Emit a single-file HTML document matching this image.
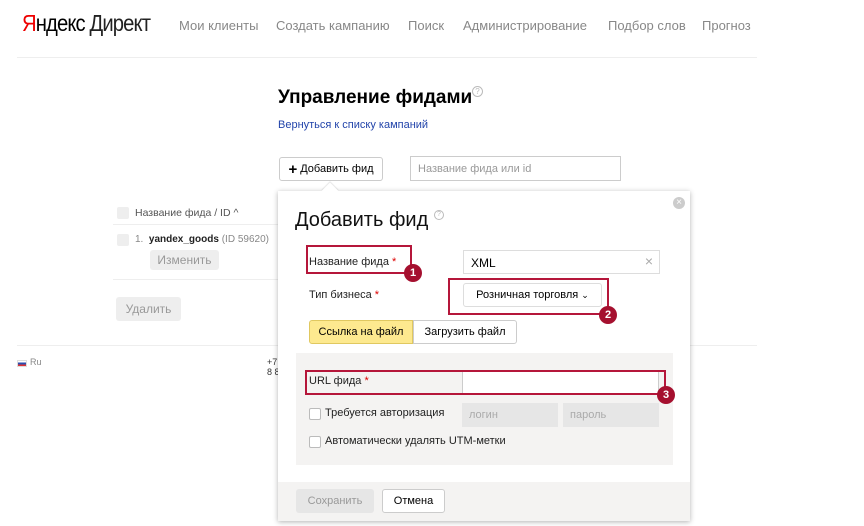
<!DOCTYPE html>
<html><head><meta charset="utf-8"><style>
*{box-sizing:border-box;margin:0;padding:0}
body{width:864px;height:526px;background:#fff;font-family:"Liberation Sans",sans-serif;position:relative;overflow:hidden;color:#000}
.a{position:absolute;white-space:nowrap}
.nav{font-size:13px;color:#888;top:18px}
.red{color:#d00}
.btn{position:absolute;border:1px solid #ccc;border-radius:3px;background:#fff;font-size:11px;display:flex;align-items:center;justify-content:center}
.gbtn{position:absolute;background:#eee;border-radius:3px;color:#999;font-size:12px;display:flex;align-items:center;justify-content:center}
.hl{position:absolute;border:2px solid #b5163a}
.num{position:absolute;width:18px;height:18px;border-radius:50%;background:#a5102f;color:#fff;font-size:11px;font-weight:bold;display:flex;align-items:center;justify-content:center}
.cb{position:absolute;width:12px;height:12px;border:1px solid #bbb;border-radius:2px;background:#fff}
.f{font-size:11px;color:#222}
</style></head><body>
<div class="a" style="left:22px;top:10px;font-size:23px;letter-spacing:-1px;transform:scaleX(.88);transform-origin:left"><span style="color:#e00">Я</span>ндекс <span style="color:#222">Директ</span></div>
<div class="a nav" style="left:179px">Мои клиенты</div>
<div class="a nav" style="left:276px">Создать кампанию</div>
<div class="a nav" style="left:408px">Поиск</div>
<div class="a nav" style="left:463px">Администрирование</div>
<div class="a nav" style="left:608px">Подбор слов</div>
<div class="a nav" style="left:702px">Прогноз</div>
<div class="a" style="left:17px;top:57px;width:740px;height:1px;background:#eee"></div>
<div class="a" style="left:278px;top:87px;font-size:19px;font-weight:bold">Управление фидами</div>
<div class="a" style="left:472px;top:86px;width:11px;height:11px;border:1px solid #bbb;border-radius:50%;font-size:8px;color:#bbb;text-align:center;line-height:9px;background:#fff">?</div>
<div class="a" style="left:278px;top:119px;font-size:11px;color:#2244aa">Вернуться к списку кампаний</div>
<div class="btn" style="left:279px;top:157px;width:104px;height:24px"><b style="font-size:15px;margin-right:3px">+</b>Добавить фид</div>
<div class="a" style="left:410px;top:156px;width:211px;height:25px;border:1px solid #ccc;font-size:11px;color:#999;padding:6px 7px">Название фида или id</div>
<div class="cb" style="left:117px;top:207px;background:#eee;border:none"></div>
<div class="a" style="left:135px;top:207px;font-size:10.5px;color:#555">Название фида / ID ^</div>
<div class="a" style="left:113px;top:224px;width:170px;height:1px;background:#eee"></div>
<div class="cb" style="left:117px;top:234px;background:#eee;border:none"></div>
<div class="a" style="left:135px;top:234px;font-size:10px;color:#888">1.&nbsp; <b style="color:#222">yandex_goods</b> (ID 59620)</div>
<div class="gbtn" style="left:150px;top:250px;width:69px;height:20px">Изменить</div>
<div class="a" style="left:113px;top:279px;width:170px;height:1px;background:#eee"></div>
<div class="gbtn" style="left:116px;top:297px;width:65px;height:24px">Удалить</div>
<div class="a" style="left:17px;top:345px;width:740px;height:1px;background:#eee"></div>
<div class="a" style="left:17px;top:360px;width:10px;height:7px;background:linear-gradient(#fff 33%,#2a4fb0 33%,#2a4fb0 66%,#d33 66%);border:1px solid #ddd"></div>
<div class="a" style="left:30px;top:357px;font-size:9px;color:#888">Ru</div>
<div class="a" style="left:267px;top:357px;font-size:9px;color:#333;line-height:10px">+7<br>8 8</div>
<!-- modal -->
<div class="a" style="left:278px;top:191px;width:412px;height:330px;background:#fff;box-shadow:0 1px 5px rgba(0,0,0,.3)"></div>
<div class="a" style="left:324px;top:185px;width:12px;height:12px;background:#fff;transform:rotate(45deg);box-shadow:-1px -1px 1px rgba(0,0,0,.1)"></div>
<div class="a" style="left:673px;top:197px;width:12px;height:12px;border-radius:50%;background:#ccc;color:#fff;font-size:10px;text-align:center;line-height:12px">×</div>
<div class="a" style="left:295px;top:209px;font-size:20px;color:#111">Добавить фид</div>
<div class="a" style="left:434px;top:210px;width:10px;height:10px;border:1px solid #bbb;border-radius:50%;font-size:7px;color:#bbb;text-align:center;line-height:8px;background:#fff">?</div>
<div class="a f" style="left:309px;top:256px">Название фида <span class="red">*</span></div>
<div class="hl" style="left:306px;top:245px;width:106px;height:29px"></div>
<div class="num" style="left:404px;top:264px">1</div>
<div class="a" style="left:463px;top:250px;width:197px;height:24px;border:1px solid #ddd;font-size:12px;padding:5px 7px">XML<span style="position:absolute;right:6px;color:#aaa;font-size:14px;top:2px">×</span></div>
<div class="a f" style="left:309px;top:289px">Тип бизнеса <span class="red">*</span></div>
<div class="btn" style="left:463px;top:283px;width:139px;height:24px;border-color:#ddd">Розничная торговля&nbsp;<span style="font-size:9px">&#8964;</span></div>
<div class="hl" style="left:448px;top:278px;width:161px;height:37px"></div>
<div class="num" style="left:599px;top:306px">2</div>
<div class="a" style="left:309px;top:320px;width:104px;height:24px;background:#fde98f;border:1px solid #e0c860;border-radius:3px 0 0 3px;font-size:11px;display:flex;align-items:center;justify-content:center">Ссылка на файл</div>
<div class="a" style="left:413px;top:320px;width:104px;height:24px;background:#fff;border:1px solid #ccc;border-radius:0 3px 3px 0;font-size:11px;display:flex;align-items:center;justify-content:center">Загрузить файл</div>
<div class="a" style="left:296px;top:353px;width:377px;height:112px;background:#f4f3f2"></div>
<div class="a f" style="left:309px;top:375px">URL фида <span class="red">*</span></div>
<div class="a" style="left:462px;top:371px;width:197px;height:23px;background:#fff;border:1px solid #ccc"></div>
<div class="hl" style="left:305px;top:370px;width:361px;height:25px"></div>
<div class="num" style="left:657px;top:386px">3</div>
<div class="cb" style="left:309px;top:408px"></div>
<div class="a f" style="left:325px;top:407px">Требуется авторизация</div>
<div class="a" style="left:462px;top:403px;width:96px;height:24px;background:#e6e6e6;font-size:11px;color:#aaa;padding:6px 7px">логин</div>
<div class="a" style="left:563px;top:403px;width:96px;height:24px;background:#e6e6e6;font-size:11px;color:#aaa;padding:6px 7px">пароль</div>
<div class="cb" style="left:309px;top:436px"></div>
<div class="a f" style="left:325px;top:435px">Автоматически удалять UTM-метки</div>
<div class="a" style="left:278px;top:482px;width:412px;height:39px;background:#f4f3f2"></div>
<div class="gbtn" style="left:296px;top:489px;width:78px;height:24px;background:#e6e6e6;font-size:11px">Сохранить</div>
<div class="btn" style="left:382px;top:489px;width:63px;height:24px">Отмена</div>
</body></html>
